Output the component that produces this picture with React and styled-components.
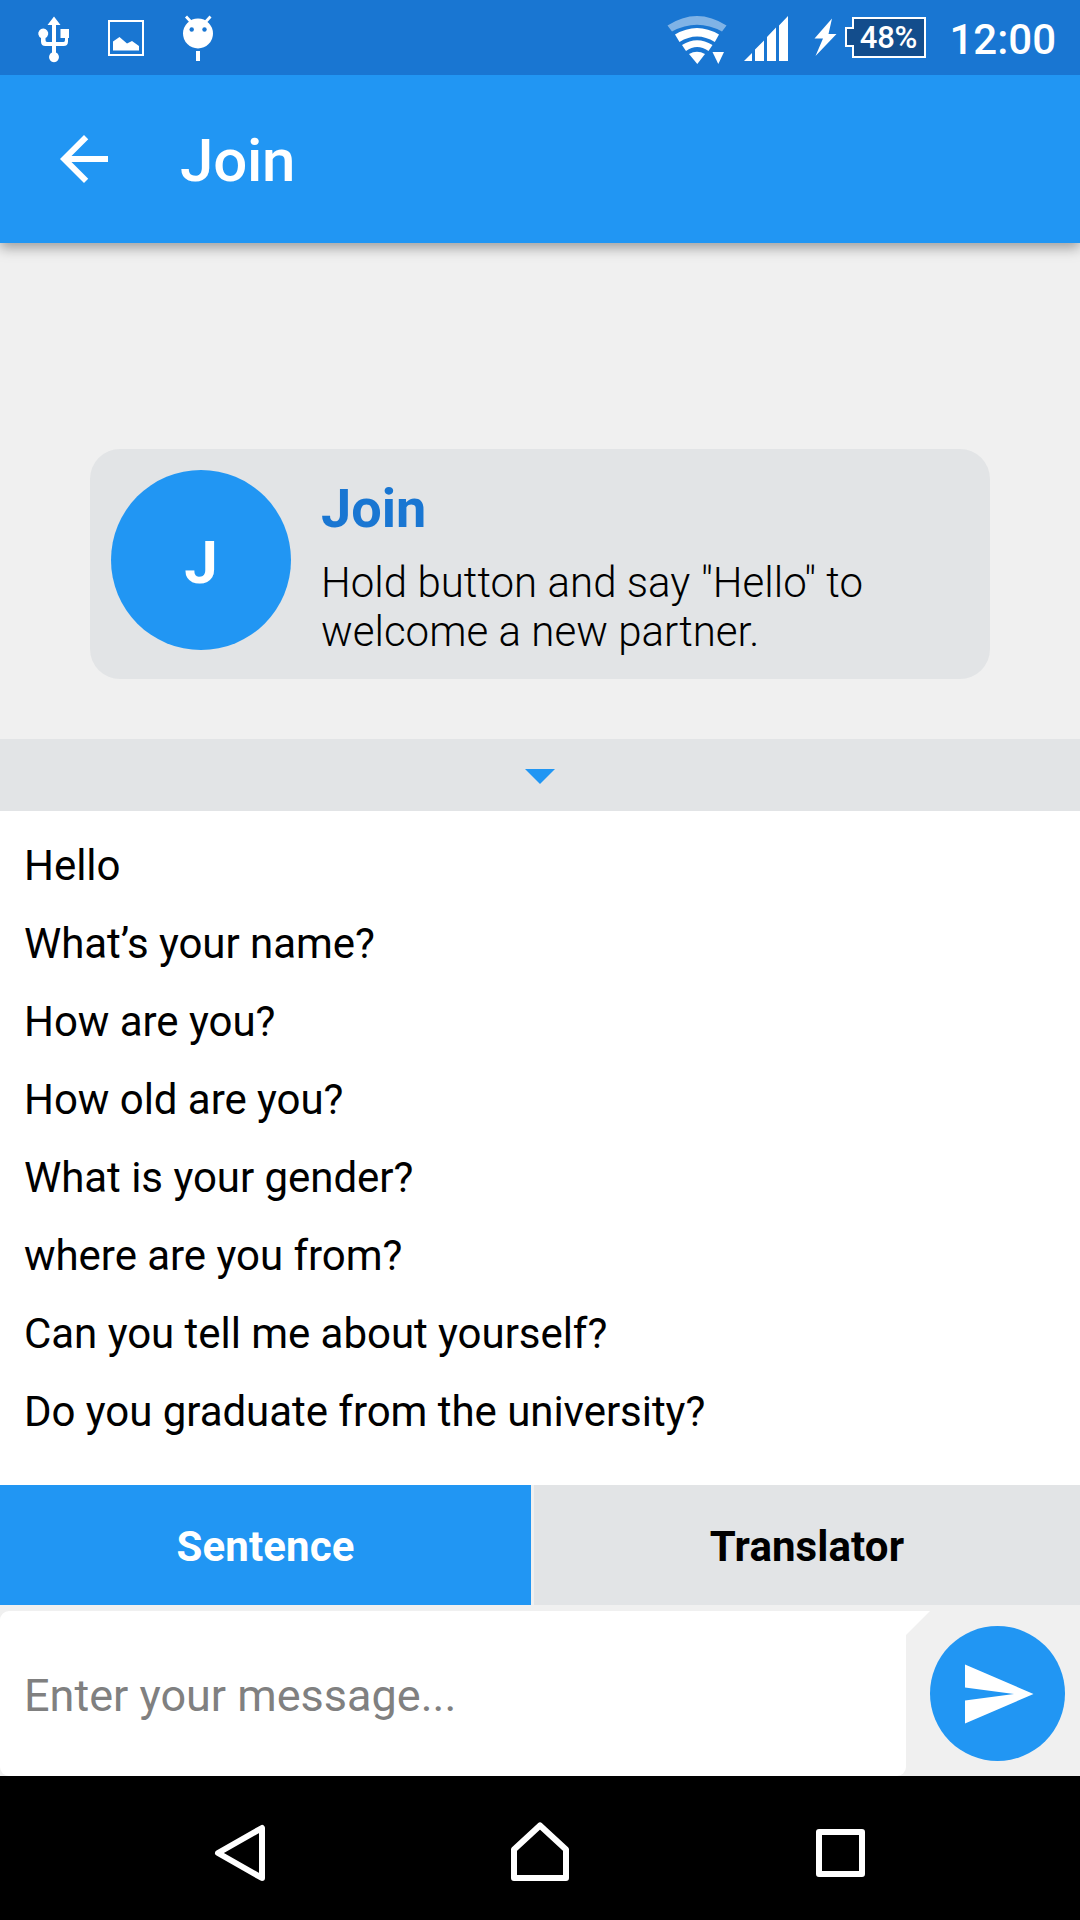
import React from "react";
import styled, { createGlobalStyle } from "styled-components";

const GlobalStyle = createGlobalStyle`
  html, body { margin: 0; padding: 0; }
  * { box-sizing: border-box; }
  body { font-family: Roboto, "Noto Sans", sans-serif; background: #f0f0f0; }
`;

const Screen = styled.div`
  width: 1080px;
  height: 1920px;
  display: flex;
  flex-direction: column;
  background: #f0f0f0;
  overflow: hidden;
`;

const StatusBar = styled.header`
  height: 75px;
  flex: none;
  display: flex;
  justify-content: space-between;
  background: #1976d2;
  color: #fff;
  z-index: 2;
`;

const StatusIcons = styled.svg`
  display: block;
  width: ${(p) => p.$width}px;
  height: 75px;
  flex: none;
`;

const StatusRight = styled.div`
  display: flex;
  padding-right: 24px;
`;

const Battery = styled.div`
  width: 81px;
  height: 75px;
  margin-right: 23px;
  display: flex;
  align-items: center;
`;

const BatteryBody = styled.div`
  width: 74px;
  height: 41px;
  margin-top: -1px;
  border: 2px solid #fff;
  border-left: 0;
  background: #134d8c;
  font-size: 31px;
  font-weight: 500;
  line-height: 37px;
  letter-spacing: -0.3px;
  text-align: center;
  padding-right: 2px;
`;

const BatteryTip = styled.svg`
  flex: none;
  width: 9px;
  height: 41px;
  margin-top: -1px;
`;

const Clock = styled.span`
  font-size: 42px;
  font-weight: 500;
  line-height: 79px;
  white-space: nowrap;
`;

const Toolbar = styled.nav`
  height: 168px;
  flex: none;
  display: flex;
  align-items: center;
  background: #2196f3;
  color: #fff;
  box-shadow: 0 5px 12px rgba(0, 0, 0, 0.34);
  z-index: 1;
`;

const BackButton = styled.button`
  width: 168px;
  height: 168px;
  padding: 0 0 0 60px;
  border: 0;
  background: none;
  color: inherit;
  display: flex;
  align-items: center;
`;

const Title = styled.h1`
  margin: 0;
  padding: 3px 0 0 12px;
  font-size: 60px;
  font-weight: 500;
  line-height: 70px;
  letter-spacing: -0.2px;
`;

const Conversation = styled.main`
  height: 496px;
  flex: none;
  padding: 0 90px 60px;
  display: flex;
  flex-direction: column;
  justify-content: flex-end;
`;

const Card = styled.article`
  height: 230px;
  padding: 21px;
  border-radius: 30px;
  background: #e2e4e6;
  display: flex;
  gap: 30px;
`;

const Avatar = styled.div`
  width: 180px;
  height: 180px;
  flex: none;
  border-radius: 50%;
  background: #2196f3;
  color: #fff;
  display: flex;
  align-items: center;
  justify-content: center;
  font-size: 60px;
  font-weight: 700;
  line-height: 70px;
  padding-top: 6px;
`;

const CardText = styled.div`
  padding-top: 7px;
`;

const Sender = styled.h2`
  margin: 0 0 17px;
  color: #1976d2;
  font-size: 54px;
  font-weight: 700;
  line-height: 64px;
`;

const Message = styled.p`
  margin: 0;
  width: 570px;
  color: #000;
  font-size: 42px;
  font-weight: 300;
  line-height: 49px;
  letter-spacing: 0.03px;
`;

const CollapseBar = styled.div`
  height: 72px;
  flex: none;
  padding-top: 2px;
  background: #e2e4e6;
  display: flex;
  align-items: center;
  justify-content: center;
`;

const Phrases = styled.ul`
  height: 674px;
  flex: none;
  margin: 0;
  padding: 16px 24px;
  list-style: none;
  background: #fff;
`;

const Phrase = styled.li`
  height: 78px;
  color: #000;
  font-size: 42px;
  line-height: 78px;
  letter-spacing: -0.04px;
  white-space: nowrap;
`;

const Tabs = styled.div`
  height: 120px;
  flex: none;
  display: flex;
  gap: 3px;
`;

const Tab = styled.button`
  width: ${(p) => p.$width}px;
  padding: 3px 0 0;
  border: 0;
  background: ${(p) => (p.$active ? "#2196f3" : "#e2e4e6")};
  color: ${(p) => (p.$active ? "#fff" : "#000")};
  font: 700 42px/49px Roboto, sans-serif;
  letter-spacing: 0.1px;
`;

const Composer = styled.form`
  height: 171px;
  flex: none;
  padding-top: 6px;
  display: flex;
`;

const Field = styled.div`
  width: 906px;
  height: 165px;
  padding: 4px 24px 0;
  border-radius: 9px 0 9px 9px;
  background: #fff;
  display: flex;
  align-items: center;
`;

const Input = styled.input`
  width: 100%;
  padding: 0;
  border: 0;
  outline: 0;
  background: none;
  color: #000;
  font: 400 45px/53px Roboto, sans-serif;
  &::placeholder { color: #808080; opacity: 1; }
`;

const BubbleTail = styled.svg`
  width: 24px;
  height: 24px;
  flex: none;
  display: block;
`;

const SendButton = styled.button`
  width: 135px;
  height: 135px;
  margin-top: 15px;
  padding: 0;
  border: 0;
  border-radius: 50%;
  background: #2196f3;
`;

const NavBar = styled.footer`
  height: 144px;
  flex: none;
  background: #000;
  display: flex;
  justify-content: center;
`;

const NavButton = styled.button`
  width: 300px;
  height: 144px;
  padding: 0;
  border: 0;
  background: none;
  display: flex;
  align-items: center;
  justify-content: center;
`;

const NAV_PATHS = [
  "M262 52v50L218 77z",
  "M540 49.500 566 73.500V102H514V73.500z",
  "M819 56h43v42h-43z",
];

const PHRASES = [
  "Hello",
  "What’s your name?",
  "How are you?",
  "How old are you?",
  "What is your gender?",
  "where are you from?",
  "Can you tell me about yourself?",
  "Do you graduate from the university?",
];

function NotificationIcons() {
  return (
    <StatusIcons $width={240} viewBox="0 0 240 75" fill="#fff">
      <path d="M54 16.500 60.500 25H56v17h7.500q1.500 0 1.500-2V38h-4.500V29H69v9h-1v3.500q0 4.500-4.500 4.500H56v6.600a5 5 0 1 1-4 0V46h-6.500Q41 46 41 41.500V38a5 5 0 1 1 4.500 0v2q0 2 1.500 2h5V25h-4.500z" />
      <path d="M109 21h34v34h-34z" fill="none" stroke="#fff" strokeWidth="2" />
      <path d="M113 50.500V41.500l6.500-4.500 7.500 6.500 5-2.500 7 5v4.500z" />
      <path d="M186 16.500l5.500 6M210.500 16.500 205 22.500" stroke="#fff" strokeWidth="2.800" />
      <circle cx="198" cy="33.500" r="15" />
      <circle cx="191.700" cy="29.500" r="2.200" fill="#1976d2" />
      <circle cx="204.500" cy="29.500" r="2.200" fill="#1976d2" />
      <path d="M196 51h4v10h-4z" />
    </StatusIcons>
  );
}

function SignalIcons() {
  return (
    <StatusIcons $width={181} viewBox="664 0 181 75" fill="#fff">
      <path d="M667.500 25.500Q697 6.500 726.500 25.500L722 31.500Q697 18 672 31.500z" opacity=".45" />
      <path d="M675 34.500Q697 21.500 719 34.500L714.800 42Q697 31 679.500 42z" />
      <path d="M682 45Q697 35.500 712.500 45L708.500 51Q697 43 686 51z" />
      <path d="M689 54Q697 49.500 705 54L697.300 64z" />
      <path d="M712.500 52h11.500l-5.700 12z" />
      <path d="M744 61l8-8v8zM755 61V49.500l9-9V61zM767 61V37l9-9.500V61zM779 61V25.500l9-9.500V61z" />
      <path d="M832 18.500 814.500 38.500H823L815.500 56 836.500 34H828.500z" />
    </StatusIcons>
  );
}

export default function App() {
  return (
    <>
      <GlobalStyle />
      <Screen>
        <StatusBar>
          <NotificationIcons />
          <StatusRight>
            <SignalIcons />
            <Battery>
              <BatteryTip viewBox="0 0 9 41">
                <path d="M9 1H8V11H1V29H8V40H9" fill="#134d8c" stroke="#fff" strokeWidth="2" />
              </BatteryTip>
              <BatteryBody>48%</BatteryBody>
            </Battery>
            <Clock>12:00</Clock>
          </StatusRight>
        </StatusBar>
        <Toolbar>
          <BackButton aria-label="Back">
            <svg width="48" height="48" viewBox="4 4 16 16" fill="#fff">
              <path d="M20 11H7.830l5.590-5.590L12 4l-8 8 8 8 1.410-1.410L7.830 13H20v-2z" />
            </svg>
          </BackButton>
          <Title>Join</Title>
        </Toolbar>
        <Conversation>
          <Card>
            <Avatar>J</Avatar>
            <CardText>
              <Sender>Join</Sender>
              <Message>Hold button and say "Hello" to welcome a new partner.</Message>
            </CardText>
          </Card>
        </Conversation>
        <CollapseBar>
          <svg width="30" height="15" viewBox="0 0 30 15">
            <path d="M0 0h30L15 15z" fill="#2196f3" />
          </svg>
        </CollapseBar>
        <Phrases>
          {PHRASES.map((text) => (
            <Phrase key={text}>{text}</Phrase>
          ))}
        </Phrases>
        <Tabs>
          <Tab $active $width={531}>Sentence</Tab>
          <Tab $width={546}>Translator</Tab>
        </Tabs>
        <Composer onSubmit={(e) => e.preventDefault()}>
          <Field>
            <Input placeholder="Enter your message..." />
          </Field>
          <BubbleTail viewBox="0 0 24 24">
            <path d="M0 0h24L0 24z" fill="#fff" />
          </BubbleTail>
          <SendButton aria-label="Send">
            <svg width="135" height="135" viewBox="0 0 135 135">
              <path d="M35 38.500 103.500 68 35 97.500V74.500L84 68 35 61.500z" fill="#fff" />
            </svg>
          </SendButton>
        </Composer>
        <NavBar>
          {NAV_PATHS.map((d, i) => (
            <NavButton key={d}>
              <svg width="300" height="144" viewBox={`${90 + i * 300} 0 300 144`}>
                <path d={d} fill="none" stroke="#fff" strokeWidth="6" strokeLinejoin="round" />
              </svg>
            </NavButton>
          ))}
        </NavBar>
      </Screen>
    </>
  );
}
